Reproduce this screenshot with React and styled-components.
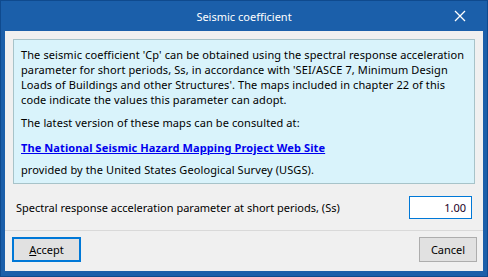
import React from "react";
import styled, { createGlobalStyle } from "styled-components";

const Global = createGlobalStyle`
  html, body { margin: 0; padding: 0; background: #1b5faa; }
  body { font-family: "Noto Sans", "Open Sans", sans-serif; }
`;

const Window = styled.div`
  width: 488px;
  height: 277px;
  box-sizing: border-box;
  background: #1b5faa;
  border: 1px solid #0f4a8e;
  display: flex;
  flex-direction: column;
  padding: 0 4px 5px 4px;
`;

const TitleBar = styled.div`
  height: 30px;
  position: relative;
  display: flex;
  align-items: center;
  justify-content: center;
  color: #fff;
  font-size: 11px;
`;

const CloseButton = styled.div`
  position: absolute;
  right: 17px;
  top: 9px;
  width: 12px;
  height: 12px;
  display: flex;
`;

const Client = styled.div`
  flex: 1;
  background: #f0f0f0;
  display: flex;
  flex-direction: column;
`;

const Body = styled.div`
  padding: 8px 8px 0 8px;
  display: flex;
  flex-direction: column;
`;

const InfoBox = styled.div`
  background: #d9f3fb;
  border: 1px solid #a7c3c9;
  padding: 7px 7px 6px 7px;
  font-size: 11px;
  line-height: 15px;
  letter-spacing: 0.1px;
  color: #000;
  white-space: nowrap;
`;

const Para = styled.p`
  margin: 0 0 ${(p) => p.$gap || 8}px 0;
  &:last-child { margin-bottom: 0; }
`;

const Link = styled.a`
  color: #0000ee;
  font-weight: bold;
  text-decoration: underline;
`;

const FieldRow = styled.div`
  display: flex;
  align-items: center;
  justify-content: space-between;
  margin: 12px 3px 0 3px;
  font-size: 11px;
  color: #000;
`;

const NumberInput = styled.div`
  width: 63px;
  height: 23px;
  box-sizing: border-box;
  border: 1px solid #0078d7;
  background: #fff;
  font-size: 11px;
  display: flex;
  align-items: center;
  justify-content: flex-end;
  padding-right: 5px;
  color: #1a0026;
`;

const Separator = styled.div`
  height: 1px;
  background: #d9d9d9;
  margin-top: 11px;
`;

const ButtonBar = styled.div`
  display: flex;
  justify-content: space-between;
  align-items: center;
  padding: 6px 6px 0 7px;
`;

const Button = styled.div`
  box-sizing: border-box;
  width: ${(p) => p.$w}px;
  height: 25px;
  background: #e1e1e1;
  border: ${(p) => (p.$default ? "2px solid #0078d7" : "1px solid #adadad")};
  display: flex;
  align-items: center;
  justify-content: center;
  font-size: 11px;
  color: #000;
`;

const Mnemonic = styled.span`
  text-decoration: underline;
`;

export default function App() {
  return (
    <>
      <Global />
      <Window>
        <TitleBar>
          Seismic coefficient
          <CloseButton>
            <svg width="12" height="12" viewBox="0 0 12 12">
              <path d="M1 1 L11 11 M11 1 L1 11" stroke="#fff" strokeWidth="1.3" />
            </svg>
          </CloseButton>
        </TitleBar>
        <Client>
          <Body>
            <InfoBox>
              <Para>
                The seismic coefficient 'Cp' can be obtained using the spectral response acceleration
                <br />
                parameter for short periods, Ss, in accordance with 'SEI/ASCE 7, Minimum Design
                <br />
                Loads of Buildings and other Structures'. The maps included in chapter 22 of this
                <br />
                code indicate the values this parameter can adopt.
              </Para>
              <Para $gap={10}>The latest version of these maps can be consulted at:</Para>
              <Para $gap={7}>
                <Link>The National Seismic Hazard Mapping Project Web Site</Link>
              </Para>
              <Para>provided by the United States Geological Survey (USGS).</Para>
            </InfoBox>
            <FieldRow>
              <span>Spectral response acceleration parameter at short periods, (Ss)</span>
              <NumberInput>1.00</NumberInput>
            </FieldRow>
          </Body>
          <Separator />
          <ButtonBar>
            <Button $default $w={69}>
              <span><Mnemonic>A</Mnemonic>ccept</span>
            </Button>
            <Button $w={58}>Cancel</Button>
          </ButtonBar>
        </Client>
      </Window>
    </>
  );
}
